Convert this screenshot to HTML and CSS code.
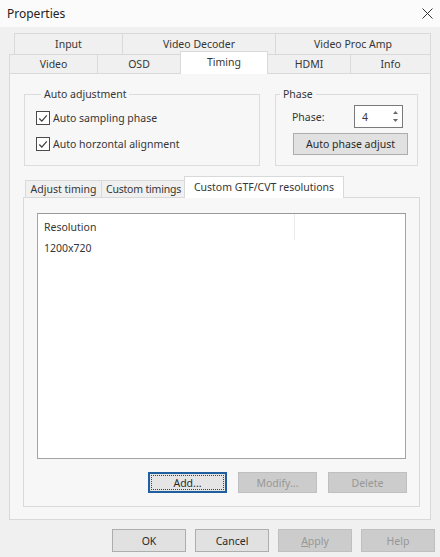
FILE: index.html
```html
<!DOCTYPE html>
<html>
<head>
<meta charset="utf-8">
<title>Properties</title>
<link rel="stylesheet" href="styles.css">
</head>
<body>
<div class="titlebar">
  <span class="title">Properties</span>
  <svg class="close" width="11" height="11" viewBox="0 0 11 11"><path d="M0.5 0.5 L10.5 10.5 M10.5 0.5 L0.5 10.5" stroke="#333" stroke-width="1" fill="none"/></svg>
</div>
<div class="client">
  <div class="tabctl">
    <div class="tabrow row1">
      <div class="tab t-input">Input</div>
      <div class="tab t-vdec">Video Decoder</div>
      <div class="tab t-vpa">Video Proc Amp</div>
    </div>
    <div class="tabrow row2">
      <div class="tab t-video">Video</div>
      <div class="tab t-osd">OSD</div>
      <div class="tab t-timing sel">Timing</div>
      <div class="tab t-hdmi">HDMI</div>
      <div class="tab t-info">Info</div>
    </div>
    <div class="page">
      <div class="groups">
        <fieldset class="group auto">
          <legend>Auto adjustment</legend>
          <div class="check first">
            <span class="box"><svg width="13" height="13" viewBox="0 0 13 13"><path d="M2.5 6.5 L5.2 9.3 L10.6 3.2" stroke="#3a3a3a" stroke-width="1.3" fill="none"/></svg></span>
            <span>Auto sampling phase</span>
          </div>
          <div class="check">
            <span class="box"><svg width="13" height="13" viewBox="0 0 13 13"><path d="M2.5 6.5 L5.2 9.3 L10.6 3.2" stroke="#3a3a3a" stroke-width="1.3" fill="none"/></svg></span>
            <span>Auto horzontal alignment</span>
          </div>
        </fieldset>
        <fieldset class="group phase">
          <legend>Phase</legend>
          <div class="phase-row">
            <span class="phase-label">Phase:</span>
            <div class="spin">
              <span class="spin-val">4</span>
              <span class="spin-arrows">
                <svg width="5" height="3" viewBox="0 0 5 3"><path d="M0 3 L2.5 0 L5 3 Z" fill="#6a6a6a"/></svg>
                <svg width="5" height="3" viewBox="0 0 5 3"><path d="M0 0 L2.5 3 L5 0 Z" fill="#6a6a6a"/></svg>
              </span>
            </div>
          </div>
          <div class="btn phase-btn">Auto phase adjust</div>
        </fieldset>
      </div>
      <div class="subtabs">
        <div class="stab s-adjust">Adjust timing</div>
        <div class="stab s-custom">Custom timings</div>
        <div class="stab s-gtf sel">Custom GTF/CVT resolutions</div>
      </div>
      <div class="subpage">
        <div class="listbox">
          <div class="lb-header"><div class="lb-col">Resolution</div></div>
          <div class="lb-row">1200x720</div>
        </div>
        <div class="btnrow">
          <div class="btn small focused"><span class="focus-rect">Add...</span></div>
          <div class="btn small disabled">Modify...</div>
          <div class="btn small disabled">Delete</div>
        </div>
      </div>
    </div>
  </div>
  <div class="footer">
    <div class="btn big">OK</div>
    <div class="btn big">Cancel</div>
    <div class="btn big disabled"><span class="acc">A</span>pply</div>
    <div class="btn big disabled">Help</div>
  </div>
</div>
</body>
</html>
```

FILE: styles.css
```css
* { box-sizing: border-box; }
html, body { margin: 0; padding: 0; }
body {
  width: 440px;
  height: 557px;
  overflow: hidden;
  background: #f0f0f0;
  font-family: "Noto Sans", "Open Sans", "Liberation Sans", sans-serif;
  font-size: 10.5px;
  color: #363636;
}

/* title bar */
.titlebar {
  height: 27px;
  background: #fbfbfb;
  display: flex;
  align-items: center;
  justify-content: space-between;
  padding: 0 7px 0 7px;
}
.title { font-size: 12px; color: #222; }
.close { display: block; }

.client { padding: 6px 0 0 9px; }
.tabctl { width: 422px; }

/* outer tabs */
.tabrow { display: flex; }
.row1 { height: 21px; margin-left: 5px; }
.row2 { height: 19px; align-items: flex-end; }
.tab {
  border: 1px solid #d9d9d9;
  border-bottom: none;
  background: #f0f0f0;
  display: flex;
  align-items: center;
  justify-content: center;
  height: 100%;
  white-space: nowrap;
}
.tab + .tab { margin-left: -1px; }
.t-input { width: 109px; }
.t-vdec { width: 154px; }
.t-vpa { width: 156px; }
.t-video { width: 89px; }
.t-osd { width: 84px; }
.t-timing { width: 88px; }
.t-hdmi { width: 84px; }
.t-info { width: 81px; }
.tab.sel {
  background: #fff;
  height: 23px;
  margin-top: -3px;
  margin-bottom: -1px;
  position: relative;
  z-index: 1;
  padding-bottom: 2px;
}

.page {
  height: 447px;
  border: 1px solid #d9d9d9;
  background: #f7f7f7;
}

/* group boxes */
.groups {
  display: flex;
  gap: 15px;
  margin: 13px 12px 0 14px;
}
.group {
  margin: 0;
  padding: 0;
  min-width: 0;
  border: 1px solid #dcdcdc;
  height: 79px;
}
.group legend {
  padding: 0 3px;
  margin-left: 5px;
  line-height: 14px;
  height: 14px;
}
.auto { width: 236px; padding: 0 0 0 11px; }
.phase { flex: 1; padding: 0; }
.phase legend { margin-left: 4px; }

.check {
  display: flex;
  align-items: center;
  height: 14px;
  gap: 3px;
  margin-top: 12px;
  white-space: nowrap;
}
.check.first { margin-top: 10px; }
.box {
  width: 14px;
  height: 14px;
  border: 1px solid #4a4a4a;
  background: #fff;
  display: flex;
  align-items: center;
  justify-content: center;
}
.box svg { display: block; }

.phase-row {
  display: flex;
  align-items: center;
  justify-content: space-between;
  margin: 4px 14px 0 16px;
  height: 23px;
}
.spin {
  width: 49px;
  height: 23px;
  border: 1px solid #7a7a7a;
  background: #fff;
  display: flex;
  align-items: center;
  justify-content: space-between;
  padding: 0 4px 0 7px;
}
.spin-arrows {
  display: flex;
  flex-direction: column;
  gap: 5px;
}
.spin-arrows svg { display: block; }

.btn {
  display: flex;
  align-items: center;
  justify-content: center;
  background: #e1e1e1;
  border: 1px solid #adadad;
  color: #2a2a2a;
  white-space: nowrap;
}
.phase-btn {
  width: 115px;
  height: 22px;
  margin: 5px 0 0 17px;
}

/* sub tabs */
.subtabs {
  display: flex;
  align-items: flex-end;
  height: 21px;
  margin: 10px 0 0 15px;
}
.stab {
  height: 17px;
  border: 1px solid #d9d9d9;
  border-bottom: none;
  background: #f0f0f0;
  display: flex;
  align-items: center;
  justify-content: center;
  white-space: nowrap;
}
.stab + .stab { margin-left: -1px; }
.s-adjust { width: 77px; }
.s-custom { width: 85px; letter-spacing: -0.2px; }
.stab.sel {
  width: 160px;
  height: 22px;
  margin-left: -2px;
  margin-bottom: -1px;
  background: #fff;
  position: relative;
  z-index: 1;
  padding-bottom: 2px;
}

.subpage {
  height: 310px;
  margin: 0 10px 0 13px;
  border: 1px solid #d9d9d9;
  background: #f7f7f7;
}
.listbox {
  height: 246px;
  margin: 15px 13px 0 13px;
  border: 1px solid #a3a3a3;
  border-top-color: #9a9a9a;
  background: #fff;
}
.lb-header { height: 26px; display: flex; }
.lb-col {
  width: 257px;
  height: 26px;
  padding-left: 6px;
  display: flex;
  align-items: center;
  border-right: 1px solid #ececec;
}
.lb-row {
  height: 16px;
  padding-left: 6px;
  display: flex;
  align-items: center;
}

.btnrow {
  display: flex;
  justify-content: flex-end;
  gap: 11px;
  margin: 13px 12px 0 0;
}
.btn.small { width: 79px; height: 21px; }
.btn.disabled {
  background: #cccccc;
  border-color: #bfbfbf;
  color: #979797;
}
.btn.focused {
  border: 2px solid #1f5f9f;
  background: #e5e5e5;
}
.focus-rect {
  display: flex;
  align-items: center;
  justify-content: center;
  width: 73px;
  height: 15px;
  border: 1px dotted #444;
}

.footer {
  display: flex;
  justify-content: flex-end;
  gap: 9px;
  margin-top: 9px;
  padding-right: 5px;
}
.btn.big { width: 74px; height: 23px; }
.acc { text-decoration: underline; }
```
